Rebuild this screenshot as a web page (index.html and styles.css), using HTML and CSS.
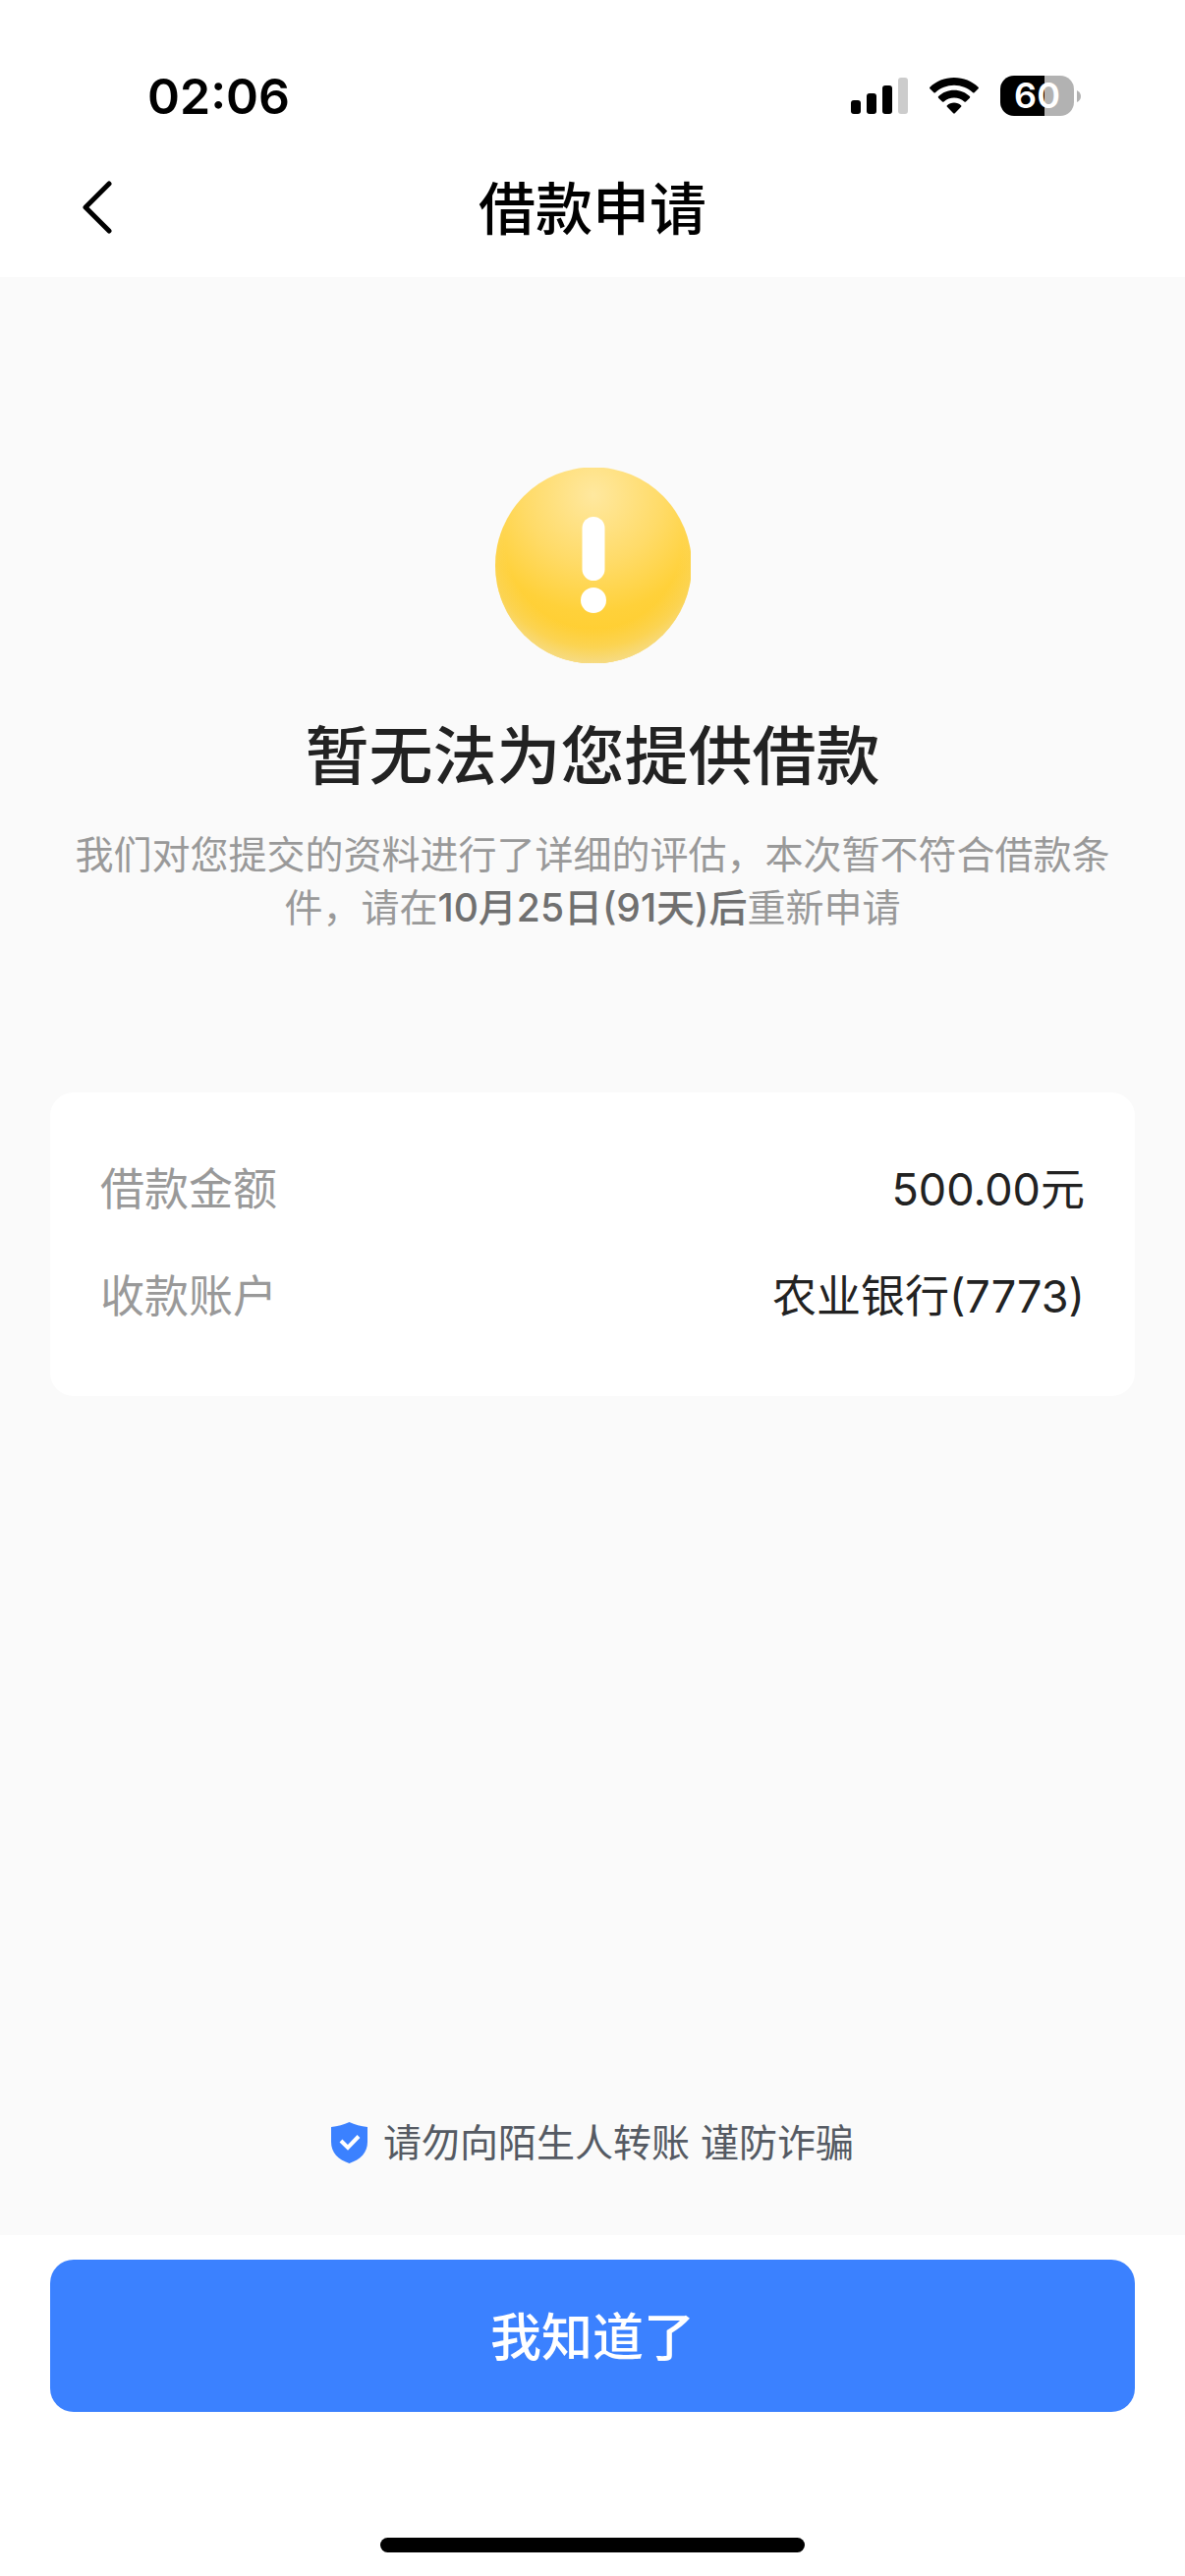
FILE: index.html
```html
<!DOCTYPE html>
<html lang="zh-CN">
<head>
  <meta charset="UTF-8">
  <meta name="viewport" content="width=device-width, initial-scale=1.0">
  <title>借款申请</title>
  <link rel="stylesheet" href="styles.css">
</head>
<body>
  <header class="header">
    <div class="status-bar">
      <span class="time">02:06</span>
      <div class="status-icons">
        <svg width="58" height="38" viewBox="0 0 58 38" aria-hidden="true">
          <rect x="0" y="23" width="10" height="14" rx="3"/>
          <rect x="16" y="16" width="10" height="21" rx="3"/>
          <rect x="32" y="8" width="10" height="29" rx="3"/>
          <rect x="48" y="0" width="10" height="37" rx="3" fill="#ccc"/>
        </svg>
        <svg width="50" height="38" viewBox="0 0 50 38" aria-hidden="true">
          <path d="M25 0C34.600 0 43.400 3.700 49.600 9.700Q50.300 10.400 49.600 11.200L45.600 15.200Q44.900 15.900 44.100 15.200C39 10.500 32.300 7.700 25 7.700C17.700 7.700 11 10.500 5.900 15.200Q5.100 15.900 4.400 15.200L0.400 11.200Q-0.300 10.400 0.400 9.700C6.600 3.700 15.400 0 25 0Z"/>
          <path d="M25 12.800C31.200 12.800 36.800 15.200 40.900 19.100Q41.700 19.900 40.900 20.700L37 24.500Q36.200 25.200 35.400 24.500C32.600 22 29 20.500 25 20.500C21 20.500 17.400 22 14.600 24.500Q13.800 25.200 13 24.500L9.100 20.700Q8.300 19.900 9.100 19.100C13.200 15.200 18.800 12.800 25 12.800Z"/>
          <path d="M25 25.600C27.700 25.600 30.200 26.600 32.100 28.200Q32.900 29 32.100 29.800L25.800 36.300Q25 37.100 24.200 36.300L17.900 29.800Q17.100 29 17.900 28.200C19.800 26.600 22.300 25.600 25 25.600Z"/>
        </svg>
        <div class="battery">
          <span class="battery-body">60</span>
          <svg width="4" height="12" viewBox="0 0 4 12" aria-hidden="true"><path d="M0 0Q4 2 4 6T0 12Z" fill="#b2b2b2"/></svg>
        </div>
      </div>
    </div>
    <nav class="nav">
      <button class="back" type="button" aria-label="返回">
        <svg width="30" height="54" viewBox="0 0 30 54" aria-hidden="true">
          <path d="M27 3L3 27L27 51" fill="none" stroke="#000" stroke-width="5" stroke-linecap="round" stroke-linejoin="round"/>
        </svg>
      </button>
      <h1 class="nav-title">借款申请</h1>
    </nav>
  </header>

  <main class="content">
    <section class="result">
      <svg class="result-icon" viewBox="0 0 199 199" aria-hidden="true">
        <defs>
          <radialGradient id="glow" gradientUnits="userSpaceOnUse" cx="100" cy="28" r="140">
            <stop offset="0" stop-color="#ffe89f"/>
            <stop offset="0.500" stop-color="#ffdb68"/>
            <stop offset="0.850" stop-color="#ffd13a"/>
            <stop offset="1" stop-color="#ffcf33"/>
          </radialGradient>
          <radialGradient id="rim" gradientUnits="userSpaceOnUse" cx="100" cy="74" r="128">
            <stop offset="0.700" stop-color="#f5dc8c" stop-opacity="0"/>
            <stop offset="0.850" stop-color="#f5dc8c" stop-opacity="0.350"/>
            <stop offset="1" stop-color="#f5dc8c"/>
          </radialGradient>
        </defs>
        <circle cx="100" cy="99.500" r="100" fill="url(#glow)"/>
        <circle cx="100" cy="99.500" r="100" fill="url(#rim)"/>
        <rect x="88.500" y="50" width="23" height="65" rx="11.500" fill="#fff"/>
        <circle cx="100" cy="135" r="13" fill="#fff"/>
      </svg>
      <h2 class="result-title">暂无法为您提供借款</h2>
      <p class="result-text">我们对您提交的资料进行了详细的评估，本次暂不符合借款条件，请在<strong>10月25日(91天)后</strong>重新申请</p>
    </section>

    <dl class="card">
      <div class="row">
        <dt>借款金额</dt>
        <dd>500.00元</dd>
      </div>
      <div class="row">
        <dt>收款账户</dt>
        <dd>农业银行(7773)</dd>
      </div>
    </dl>

    <p class="notice">
      <svg width="37" height="42" viewBox="0 0 37 42" aria-hidden="true">
        <path d="M18.500 0Q27 4 37 5V20C37 31 30 38 18.500 42C7 38 0 31 0 20V5Q10 4 18.500 0Z" fill="#3b81ff"/>
        <path d="M10 19L17 26L28 14.500" fill="none" stroke="#fff" stroke-width="4"/>
      </svg>
      <span>请勿向陌生人转账 谨防诈骗</span>
    </p>
  </main>

  <footer class="footer">
    <button class="confirm" type="button">我知道了</button>
    <div class="home-indicator"></div>
  </footer>
</body>
</html>
```

FILE: styles.css
```css
* {
  box-sizing: border-box;
}
body {
  display: flex;
  flex-direction: column;
  min-height: 100vh;
  margin: 0;
  font-family: Inter, "Noto Sans CJK SC", sans-serif;
  background-color: #fafafa;
  color: #222;
}
h1, h2, p, dl, dd {
  margin: 0;
}
svg {
  display: block;
}
button {
  padding: 0;
  border: none;
  font-family: inherit;
  cursor: pointer;
}

/* header */
.header {
  background-color: #fff;
  color: #000;
}
.status-bar {
  display: flex;
  align-items: center;
  justify-content: space-between;
  height: 141px;
  padding: 54px 106px 0 150px;
}
.time {
  font-size: 50px;
  font-weight: 600;
}
.status-icons {
  display: flex;
  align-items: center;
  gap: 22px;
}
.battery {
  display: flex;
  align-items: center;
  gap: 3px;
}
.battery-body {
  width: 75px;
  border-radius: 14px;
  background: linear-gradient(to right, #000 60%, #b2b2b2 60%);
  color: #fff;
  font-size: 36px;
  font-weight: 600;
  line-height: 41px;
  text-align: center;
}
.nav {
  display: grid;
  grid-template-columns: 120px 1fr 120px;
  align-items: center;
  height: 141px;
  padding-bottom: 2px;
}
.back {
  display: flex;
  justify-content: flex-end;
  padding: 20px 6px;
  background: none;
}
.nav-title {
  padding-top: 5px;
  font-size: 58px;
  font-weight: 500;
  line-height: 60px;
  text-align: center;
}

/* result */
.content {
  display: flex;
  flex: 1;
  flex-direction: column;
  padding: 194px 51px 64px;
}
.result {
  padding: 0 16px;
  text-align: center;
}
.result-icon {
  width: 199px;
  height: 199px;
  margin: 0 auto;
}
.result-title {
  margin-top: 53px;
  font-size: 65px;
  font-weight: 500;
  line-height: 84px;
}
.result-text {
  margin-top: 31px;
  color: #999;
  font-size: 39px;
  line-height: 54px;
}
.result-text strong {
  color: #707070;
  font-weight: 500;
}

/* loan details */
.card {
  margin-top: 161px;
  padding: 44px 51px 47px;
  border-radius: 24px;
  background-color: #fff;
  font-size: 45px;
  line-height: 109px;
}
.row {
  display: flex;
  justify-content: space-between;
}
.row dt {
  color: #999;
}

.notice {
  display: flex;
  align-items: center;
  justify-content: center;
  gap: 16px;
  margin-top: auto;
  color: #555a63;
  font-size: 39px;
  line-height: 60px;
}

/* footer */
.footer {
  padding: 25px 51px 24px;
  background-color: #fff;
}
.confirm {
  display: block;
  width: 100%;
  padding-top: 5px;
  border-radius: 24px;
  background-color: #3b81ff;
  color: #fff;
  font-size: 52px;
  font-weight: 500;
  line-height: 150px;
}
.home-indicator {
  width: 432px;
  height: 15px;
  margin: 128px auto 0;
  border-radius: 8px;
  background-color: #000;
}
```
